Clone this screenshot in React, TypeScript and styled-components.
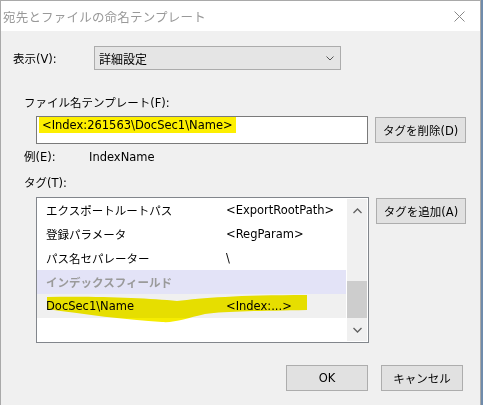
import * as React from 'react';
import styled, { createGlobalStyle } from 'styled-components';

// =========================
// Global
// =========================

const GlobalStyle = createGlobalStyle`
  html, body {
    margin: 0;
    padding: 0;
    background: #6f8bab;
  }
  * {
    box-sizing: border-box;
  }
`;

const uiFont = `"DejaVu Sans", "Noto Sans CJK JP", sans-serif`;

// =========================
// Window frame
// =========================

const Window = styled.div`
  width: 481px;
  height: 405px;
  background: #f0f0f0;
  border: 1px solid #a9a9a9;
  border-bottom: none;
  font-family: ${uiFont};
  font-size: 11.5px;
  color: #000;
  display: flex;
  flex-direction: column;
`;

const TitleBar = styled.div`
  height: 30px;
  background: #fff;
  display: flex;
  align-items: center;
  justify-content: space-between;
  padding: 0 15px 0 2px;
`;

const TitleText = styled.span`
  font-family: "Noto Sans CJK JP", sans-serif;
  font-size: 12.5px;
  color: #999;
  letter-spacing: 0.2px;
`;

const Body = styled.div`
  display: flex;
  flex-direction: column;
  padding-right: 14px;
`;

// =========================
// Rows
// =========================

const ViewRow = styled.div`
  display: flex;
  align-items: center;
  margin-top: 15px;
  padding-left: 12px;
  height: 24px;
`;

const ViewLabel = styled.span`
  width: 81px;
`;

const Select = styled.div`
  width: 247px;
  height: 24px;
  background: #e5e5e5;
  border: 1px solid #acacac;
  display: flex;
  align-items: center;
  justify-content: space-between;
  padding: 0 6px 0 4px;
  font-family: "Noto Sans CJK JP", sans-serif;
  font-size: 12px;
`;

const FieldLabel = styled.div<{ $top: number; $left?: number }>`
  margin-top: ${({ $top }) => $top}px;
  padding-left: ${({ $left }) => $left ?? 23}px;
  height: 16px;
  line-height: 16px;
  display: flex;
`;

const ExampleKey = styled.span`
  width: 33px;
`;

const ExampleValue = styled.span`
  margin-left: 32px;
`;

const ControlRow = styled.div<{ $top: number }>`
  display: flex;
  align-items: flex-start;
  gap: 7px;
  margin-top: ${({ $top }) => $top}px;
  padding-left: 35px;
`;

const TextBox = styled.div`
  width: 333px;
  height: 28px;
  background: #fff;
  border: 1px solid #7a7a7a;
  display: flex;
  align-items: flex-start;
  padding: 0 0 0 2px;
`;

const Marked = styled.span`
  background: #fdef00;
  padding: 1px 3px 0 3px;
  height: 16px;
  line-height: 15px;
`;

const Button = styled.button<{ $width?: number }>`
  width: ${({ $width }) => $width ?? 91}px;
  height: 26px;
  margin-top: 1px;
  background: #e1e1e1;
  border: 1px solid #adadad;
  font-family: ${uiFont};
  font-size: 11.5px;
  color: #000;
  padding: 0;
  display: flex;
  align-items: center;
  justify-content: center;
`;

// =========================
// List
// =========================

const ListBox = styled.div`
  position: relative;
  width: 333px;
  height: 146px;
  background: #fff;
  border: 1px solid #82868c;
  display: flex;
  padding: 0 1px 1px 0;
`;

const Rows = styled.div`
  width: 309px;
  display: flex;
  flex-direction: column;
`;

const Row = styled.div<{ $kind?: 'group' | 'selected' }>`
  height: 24px;
  display: grid;
  grid-template-columns: 180px 1fr;
  align-items: center;
  padding-left: 9px;
  background: ${({ $kind }) =>
    $kind === 'group' ? '#e3e3f7' : $kind === 'selected' ? '#f0f0f0' : 'transparent'};
  color: ${({ $kind }) => ($kind === 'group' ? '#9a9a9a' : '#000')};
  font-weight: ${({ $kind }) => ($kind === 'group' ? 'bold' : 'normal')};
  position: relative;
  z-index: 1;
`;

const Scrollbar = styled.div`
  width: 20px;
  margin-left: 1px;
  margin-top: 1px;
  background: #f0f0f0;
  display: flex;
  flex-direction: column;
  align-items: center;
`;

const ArrowCell = styled.div`
  height: 23px;
  width: 100%;
  display: flex;
  align-items: center;
  justify-content: center;
`;

const Track = styled.div`
  flex: 1;
  width: 100%;
  display: flex;
  flex-direction: column;
  justify-content: flex-end;
`;

const Thumb = styled.div`
  height: 37px;
  width: 100%;
  background: #cdcdcd;
`;

const Stroke = styled.svg`
  position: absolute;
  left: 0;
  top: 0;
  pointer-events: none;
  z-index: 2;
  mix-blend-mode: multiply;
`;

// =========================
// Footer
// =========================

const Footer = styled.div`
  display: flex;
  justify-content: flex-end;
  gap: 13px;
  margin-top: 21px;
  padding-right: 3px;
`;

const Chevron = ({ dir }: { dir: 'up' | 'down' }) => (
  <svg width="9" height="6" viewBox="0 0 9 6">
    <path
      d={dir === 'up' ? 'M0.5 5 L4.5 1 L8.5 5' : 'M0.5 1 L4.5 5 L8.5 1'}
      fill="none"
      stroke="#606060"
      strokeWidth="1.3"
    />
  </svg>
);

export default function App() {
  return (
    <>
      <GlobalStyle />
      <Window>
        <TitleBar>
          <TitleText>宛先とファイルの命名テンプレート</TitleText>
          <svg width="11" height="11" viewBox="0 0 11 11">
            <path d="M0.5 0.5 L10.5 10.5 M10.5 0.5 L0.5 10.5" stroke="#888" strokeWidth="1" />
          </svg>
        </TitleBar>
        <Body>
          <ViewRow>
            <ViewLabel>表示(V):</ViewLabel>
            <Select>
              <span>詳細設定</span>
              <svg width="8" height="5" viewBox="0 0 8 5">
                <path d="M0.5 0.5 L4 4 L7.5 0.5" fill="none" stroke="#555" strokeWidth="1" />
              </svg>
            </Select>
          </ViewRow>

          <FieldLabel $top={25}>ファイル名テンプレート(F):</FieldLabel>
          <ControlRow $top={5}>
            <TextBox>
              <Marked>&lt;Index:261563\DocSec1\Name&gt;</Marked>
            </TextBox>
            <Button>タグを削除(D)</Button>
          </ControlRow>

          <FieldLabel $top={5}>
            <ExampleKey>例(E):</ExampleKey>
            <ExampleValue>IndexName</ExampleValue>
          </FieldLabel>
          <FieldLabel $top={10}>タグ(T):</FieldLabel>

          <ControlRow $top={6}>
            <ListBox>
              <Rows>
                <Row>
                  <span>エクスポートルートパス</span>
                  <span>&lt;ExportRootPath&gt;</span>
                </Row>
                <Row>
                  <span>登録パラメータ</span>
                  <span>&lt;RegParam&gt;</span>
                </Row>
                <Row>
                  <span>パス名セパレーター</span>
                  <span>\</span>
                </Row>
                <Row $kind="group">
                  <span>インデックスフィールド</span>
                  <span />
                </Row>
                <Row $kind="selected">
                  <span>DocSec1\Name</span>
                  <span>&lt;Index:...&gt;</span>
                </Row>
              </Rows>
              <Scrollbar>
                <ArrowCell>
                  <Chevron dir="up" />
                </ArrowCell>
                <Track>
                  <Thumb />
                </Track>
                <ArrowCell>
                  <Chevron dir="down" />
                </ArrowCell>
              </Scrollbar>
              <Stroke width="333" height="146" viewBox="0 0 333 146">
                <path
                  d="M10 99 C60 98 110 100 140 103 C165 100 200 97 270 97 L270 112 C225 113 190 113 168 116 C150 120 138 125 125 124 C90 122 45 116 10 111 Z"
                  fill="#f5ec00"
                />
              </Stroke>
            </ListBox>
            <Button>タグを追加(A)</Button>
          </ControlRow>

          <Footer>
            <Button $width={82}>OK</Button>
            <Button $width={82}>キャンセル</Button>
          </Footer>
        </Body>
      </Window>
    </>
  );
}
